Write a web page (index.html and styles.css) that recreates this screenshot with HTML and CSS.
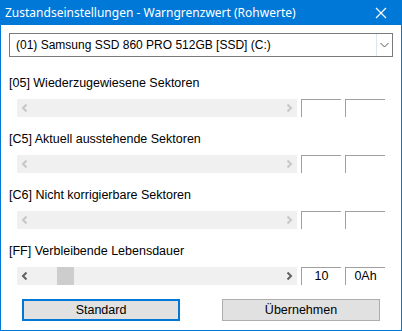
FILE: index.html
```html
<!DOCTYPE html>
<html lang="de">
  <head>
    <meta charset="UTF-8" />
    <title>Zustandseinstellungen - Warngrenzwert (Rohwerte)</title>
    <link rel="stylesheet" href="styles.css">
  </head>
  <body>
    <div class="window">
      <div class="titlebar">
        <span class="title">Zustandseinstellungen - Warngrenzwert (Rohwerte)</span>
        <svg class="close" width="12" height="12" viewBox="0 0 12 12">
          <path d="M1 1 L11 11 M11 1 L1 11" stroke="#fff" stroke-width="1.2" fill="none" />
        </svg>
      </div>

      <div class="content">
        <div class="combo">
          <span class="combo-text">(01) Samsung SSD 860 PRO 512GB [SSD] (C:)</span>
          <span class="combo-btn">
            <svg width="9" height="6" viewBox="0 0 9 6">
              <path d="M0.5 1 L4.5 5 L8.5 1" stroke="#555" stroke-width="1" fill="none" />
            </svg>
          </span>
        </div>

        <div class="group">
          <div class="label">[05] Wiederzugewiesene Sektoren</div>
          <div class="row">
            <div class="scrollbar disabled">
              <svg class="arrow" width="7" height="8" viewBox="0 0 7 8"><path d="M5.5 0.5 L2 4 L5.5 7.5" /></svg>
              <svg class="arrow" width="7" height="8" viewBox="0 0 7 8"><path d="M1.5 0.5 L5 4 L1.5 7.5" /></svg>
            </div>
            <div class="box"></div>
            <div class="box"></div>
          </div>
        </div>

        <div class="group">
          <div class="label">[C5] Aktuell ausstehende Sektoren</div>
          <div class="row">
            <div class="scrollbar disabled">
              <svg class="arrow" width="7" height="8" viewBox="0 0 7 8"><path d="M5.5 0.5 L2 4 L5.5 7.5" /></svg>
              <svg class="arrow" width="7" height="8" viewBox="0 0 7 8"><path d="M1.5 0.5 L5 4 L1.5 7.5" /></svg>
            </div>
            <div class="box"></div>
            <div class="box"></div>
          </div>
        </div>

        <div class="group">
          <div class="label">[C6] Nicht korrigierbare Sektoren</div>
          <div class="row">
            <div class="scrollbar disabled">
              <svg class="arrow" width="7" height="8" viewBox="0 0 7 8"><path d="M5.5 0.5 L2 4 L5.5 7.5" /></svg>
              <svg class="arrow" width="7" height="8" viewBox="0 0 7 8"><path d="M1.5 0.5 L5 4 L1.5 7.5" /></svg>
            </div>
            <div class="box"></div>
            <div class="box"></div>
          </div>
        </div>

        <div class="group">
          <div class="label">[FF] Verbleibende Lebensdauer</div>
          <div class="row">
            <div class="scrollbar">
              <svg class="arrow" width="7" height="8" viewBox="0 0 7 8"><path d="M5.5 0.5 L2 4 L5.5 7.5" /></svg>
              <div class="track">
                <div class="thumb" style="margin-left: 23px"></div>
              </div>
              <svg class="arrow" width="7" height="8" viewBox="0 0 7 8"><path d="M1.5 0.5 L5 4 L1.5 7.5" /></svg>
            </div>
            <div class="box">10</div>
            <div class="box">0Ah</div>
          </div>
        </div>

        <div class="buttons">
          <button class="btn default">Standard</button>
          <button class="btn">Übernehmen</button>
        </div>
      </div>
    </div>
  </body>
</html>
```

FILE: styles.css
```css
* {
  margin: 0;
  padding: 0;
  box-sizing: border-box;
}
body {
  background: #fff;
  font-family: "Liberation Sans", Arial, sans-serif;
  font-size: 12.5px;
  color: #000;
}
.window {
  width: 402px;
  height: 331px;
  border: 1px solid #0078d7;
  border-top: none;
  background: #fff;
  display: flex;
  flex-direction: column;
}
.titlebar {
  height: 25px;
  margin: 0 -1px;
  background: #0078d7;
  color: #fff;
  display: flex;
  align-items: center;
  justify-content: space-between;
  padding: 0 15px 0 5px;
}
.title {
  font-family: "Noto Sans", sans-serif;
  font-size: 12px;
}
.content {
  padding: 8px 8px 0 8px;
  display: flex;
  flex-direction: column;
}
.combo {
  height: 24px;
  border: 1px solid #7a7a7a;
  display: flex;
  align-items: center;
  font-size: 12px;
}
.combo-text {
  flex: 1;
  padding-left: 6px;
}
.combo-btn {
  width: 16px;
  height: 100%;
  border-left: 1px solid #dde6ef;
  display: flex;
  align-items: center;
  justify-content: center;
}
.group {
  margin-top: 18px;
  display: flex;
  flex-direction: column;
  gap: 8px;
}
.group + .group {
  margin-top: 14px;
}
.label {
  height: 16px;
  line-height: 16px;
}
.row {
  display: flex;
  padding-left: 8px;
  gap: 4px;
}
.scrollbar {
  width: 280px;
  height: 18px;
  background: #f0f0f0;
  display: flex;
  align-items: center;
  justify-content: space-between;
  padding: 0 4px;
}
.arrow path {
  fill: none;
  stroke: #606060;
  stroke-width: 2;
}
.scrollbar.disabled .arrow path {
  stroke: #c6c6c6;
}
.track {
  flex: 1;
  height: 18px;
  margin: 0 6px;
}
.thumb {
  width: 17px;
  height: 18px;
  background: #cdcdcd;
}
.box {
  width: 40px;
  height: 18px;
  border-top: 1px solid #a0a0a0;
  border-left: 1px solid #a0a0a0;
  text-align: center;
  line-height: 17px;
}
.buttons {
  display: flex;
  justify-content: space-between;
  padding: 0 13px;
  margin-top: 14px;
}
.btn {
  width: 158px;
  height: 22px;
  background: #e1e1e1;
  border: 1px solid #adadad;
  font-family: "Liberation Sans", Arial, sans-serif;
  font-size: 12.5px;
  color: #000;
}
.btn.default {
  border: 2px solid #0078d7;
}
```
